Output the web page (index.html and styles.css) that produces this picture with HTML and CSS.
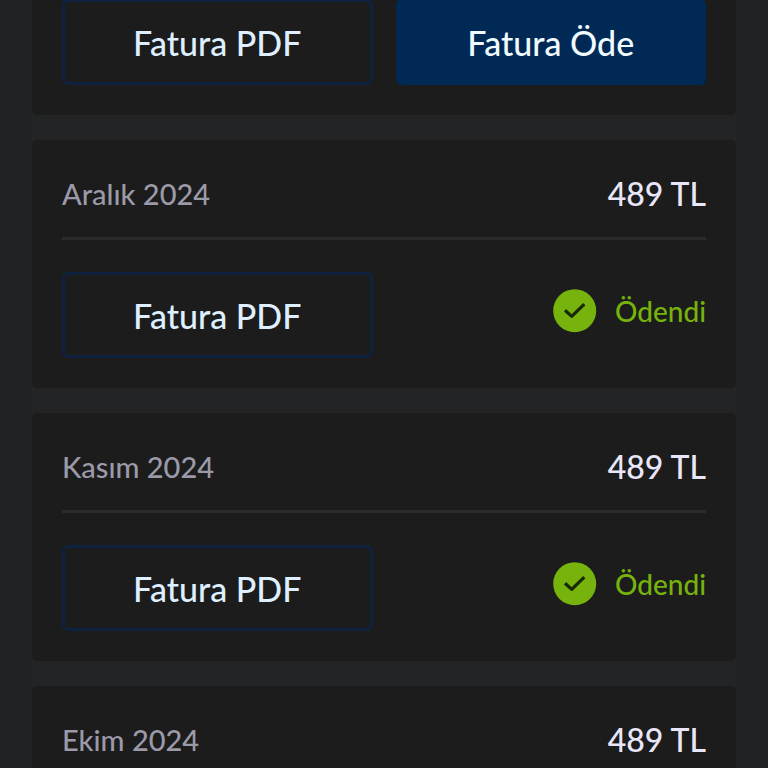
FILE: index.html
```
<!DOCTYPE html>
<html lang="tr">
<head>
    <meta charset="UTF-8">
    <meta name="viewport" content="width=device-width, initial-scale=1.0">
    <link rel="stylesheet" href="styles.css">
</head>
<body>
    <main class="invoice-list">
        <section class="card card-scrolled">
            <div class="actions">
                <button type="button" class="btn btn-outline">Fatura PDF</button>
                <button type="button" class="btn btn-primary">Fatura Öde</button>
            </div>
        </section>

        <section class="card">
            <div class="card-header">
                <h2 class="month">Aralık 2024</h2>
                <span class="amount">489 TL</span>
            </div>
            <div class="actions">
                <button type="button" class="btn btn-outline">Fatura PDF</button>
                <div class="status">
                    <svg class="status-icon" viewBox="0 0 44 44" aria-hidden="true">
                        <circle cx="21.7" cy="21.7" r="21.5" fill="#76b30c"/>
                        <path d="M12 21.3L18.7 27.4L31.3 15.2" fill="none" stroke="#18290a" stroke-width="3.2" stroke-linejoin="round"/>
                    </svg>
                    <span>Ödendi</span>
                </div>
            </div>
        </section>

        <section class="card">
            <div class="card-header">
                <h2 class="month">Kasım 2024</h2>
                <span class="amount">489 TL</span>
            </div>
            <div class="actions">
                <button type="button" class="btn btn-outline">Fatura PDF</button>
                <div class="status">
                    <svg class="status-icon" viewBox="0 0 44 44" aria-hidden="true">
                        <circle cx="21.7" cy="21.7" r="21.5" fill="#76b30c"/>
                        <path d="M12 21.3L18.7 27.4L31.3 15.2" fill="none" stroke="#18290a" stroke-width="3.2" stroke-linejoin="round"/>
                    </svg>
                    <span>Ödendi</span>
                </div>
            </div>
        </section>

        <section class="card">
            <div class="card-header">
                <h2 class="month">Ekim 2024</h2>
                <span class="amount">489 TL</span>
            </div>
        </section>
    </main>
</body>
</html>
```
FILE: styles.css
```
* {
    margin: 0;
    padding: 0;
    box-sizing: border-box;
}

body {
    height: 100vh;
    overflow: hidden;
    padding: 0 32px;
    background: #202224;
    font-family: "Lato Medium", Lato, "Noto Sans", sans-serif;
    font-weight: 500;
}

.invoice-list {
    display: flex;
    flex-direction: column;
    gap: 25px;
    margin-top: -1px;
    background: #232425;
}

.card {
    padding: 0 30px 30px;
    background: #1c1c1c;
    border-radius: 5px;
}

.card-scrolled {
    border-top-left-radius: 0;
    border-top-right-radius: 0;
}

.card-header {
    display: flex;
    justify-content: space-between;
    align-items: center;
    margin-bottom: 32px;
    padding: 34px 0 23px;
    border-bottom: 3px solid #2b2b2d;
    line-height: 40px;
}

.month {
    font-size: 29px;
    font-weight: 500;
    color: #9a9aa8;
}

.amount {
    font-size: 32px;
    color: #e8e6f8;
}

.actions {
    display: grid;
    grid-template-columns: 1fr 1fr;
    gap: 23px;
}

.btn {
    height: 86px;
    border-radius: 6px;
    font: inherit;
    font-size: 34px;
}

.btn-outline {
    border: 3px solid #0e223f;
    background: transparent;
    color: #deefff;
}

.btn-primary {
    border: none;
    background: #002955;
    color: #f0faff;
}

.status {
    display: flex;
    justify-content: flex-end;
    align-items: center;
    gap: 18px;
    padding-bottom: 8px;
    font-size: 28px;
    color: #76b30c;
}

.status-icon {
    width: 44px;
    height: 44px;
}
```
